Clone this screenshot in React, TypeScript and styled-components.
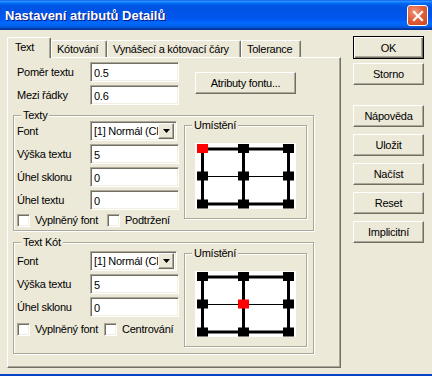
import React from "react";
import styled, { createGlobalStyle } from "styled-components";

const GlobalStyle = createGlobalStyle`
  html, body {
    margin: 0;
    padding: 0;
    background: #ece9d8;
  }
  body {
    font-family: "Liberation Sans", Arial, sans-serif;
    font-size: 11px;
    letter-spacing: -0.25px;
    color: #000;
  }
`;

function CloseIcon() {
  return (
    <svg width="12" height="12" viewBox="0 0 12 12">
      <path d="M2 2 L10 10 M10 2 L2 10" stroke="#fff" strokeWidth="2.2" strokeLinecap="square" />
    </svg>
  );
}

function DownArrow() {
  return (
    <svg width="7" height="4" viewBox="0 0 7 4">
      <path d="M0 0 H7 L3.5 4 Z" fill="#000" />
    </svg>
  );
}

// grid of anchor points, `active` is [col, row] of the red one
function PlacementGrid({ active }: { active: [number, number] }) {
  const xs = [7.5, 48.5, 93.5];
  const ys = [5.5, 33, 61];
  return (
    <svg width="101" height="66" viewBox="0 0 101 66">
      <rect x="7.5" y="6" width="86" height="55" fill="none" stroke="#000" strokeWidth="3" />
      <line x1="48.5" y1="6" x2="48.5" y2="61" stroke="#000" strokeWidth="3" />
      <line x1="7" y1="33.5" x2="94" y2="33.5" stroke="#000" strokeWidth="1" />
      {ys.map((y, r) =>
        xs.map((x, c) => (
          <rect
            key={`${r}-${c}`}
            x={x - 5.5}
            y={y - 4.5}
            width="11"
            height="9"
            fill={active[0] === c && active[1] === r ? "#ff0000" : "#000"}
          />
        ))
      )}
    </svg>
  );
}

export default function App() {
  return (
    <>
      <GlobalStyle />
      <Window>
        <TitleBar>
          <Title>Nastavení atributů Detailů</Title>
          <CloseButton>
            <CloseIcon />
          </CloseButton>
        </TitleBar>

        <Content>
          <LeftColumn>
            <TabRow>
              <Tab $active $w={44}>Text</Tab>
              <Tab $w={56}>Kótování</Tab>
              <Tab $w={134}>Vynášecí a kótovací čáry</Tab>
              <Tab $w={60}>Tolerance</Tab>
            </TabRow>

            <Panel>
              <TopSection>
                <FieldList>
                  <FieldRow>
                    <Label>Poměr textu</Label>
                    <TextInput readOnly value="0.5" />
                  </FieldRow>
                  <FieldRow>
                    <Label>Mezi řádky</Label>
                    <TextInput readOnly value="0.6" />
                  </FieldRow>
                </FieldList>
                <FontButton>Atributy fontu...</FontButton>
              </TopSection>

              <GroupBox $h={116} $top={10} $pad={5}>
                <Legend>Texty</Legend>
                <FieldList>
                  <FieldRow>
                    <Label>Font</Label>
                    <Combo>
                      <ComboText>[1] Normál (CK</ComboText>
                      <DropButton>
                        <DownArrow />
                      </DropButton>
                    </Combo>
                  </FieldRow>
                  <FieldRow>
                    <Label>Výška textu</Label>
                    <TextInput readOnly value="5" />
                  </FieldRow>
                  <FieldRow>
                    <Label>Úhel sklonu</Label>
                    <TextInput readOnly value="0" />
                  </FieldRow>
                  <FieldRow>
                    <Label>Úhel textu</Label>
                    <TextInput readOnly value="0" />
                  </FieldRow>
                  <CheckRow>
                    <CheckItem $w={90}>
                      <CheckBox />
                      Vyplněný font
                    </CheckItem>
                    <CheckItem>
                      <CheckBox />
                      Podtržení
                    </CheckItem>
                  </CheckRow>
                </FieldList>
                <PlacementBox $top={4}>
                  <Legend>Umístění</Legend>
                  <GridCanvas>
                    <PlacementGrid active={[0, 0]} />
                  </GridCanvas>
                </PlacementBox>
              </GroupBox>

              <GroupBox $h={112} $top={11} $pad={8}>
                <Legend>Text Kót</Legend>
                <FieldList>
                  <FieldRow>
                    <Label>Font</Label>
                    <Combo>
                      <ComboText>[1] Normál (CK</ComboText>
                      <DropButton>
                        <DownArrow />
                      </DropButton>
                    </Combo>
                  </FieldRow>
                  <FieldRow>
                    <Label>Výška textu</Label>
                    <TextInput readOnly value="5" />
                  </FieldRow>
                  <FieldRow>
                    <Label>Úhel sklonu</Label>
                    <TextInput readOnly value="0" />
                  </FieldRow>
                  <CheckRow $top={2}>
                    <CheckItem $w={87}>
                      <CheckBox />
                      Vyplněný font
                    </CheckItem>
                    <CheckItem>
                      <CheckBox />
                      Centrování
                    </CheckItem>
                  </CheckRow>
                </FieldList>
                <PlacementBox $top={2}>
                  <Legend>Umístění</Legend>
                  <GridCanvas>
                    <PlacementGrid active={[1, 1]} />
                  </GridCanvas>
                </PlacementBox>
              </GroupBox>
            </Panel>
          </LeftColumn>

          <ButtonColumn>
            <DefaultButton>OK</DefaultButton>
            <SideButton $top={4}>Storno</SideButton>
            <SideButton $top={20}>Nápověda</SideButton>
            <SideButton>Uložit</SideButton>
            <SideButton>Načíst</SideButton>
            <SideButton>Reset</SideButton>
            <SideButton>Implicitní</SideButton>
          </ButtonColumn>
        </Content>
        <BottomEdge />
      </Window>
    </>
  );
}

const Window = styled.div`
  width: 432px;
  height: 376px;
  overflow: hidden;
  display: flex;
  flex-direction: column;
  background: #ece9d8;
`;

const TitleBar = styled.div`
  height: 30px;
  flex: none;
  display: flex;
  align-items: center;
  justify-content: space-between;
  padding: 0 4px 0 5px;
  box-sizing: border-box;
  background: linear-gradient(
    to bottom,
    #0058ee 0%,
    #3593ff 4%,
    #288eff 6%,
    #127dff 8%,
    #036ffc 10%,
    #0262ee 14%,
    #0057e5 20%,
    #0054e3 24%,
    #0055eb 56%,
    #005bf5 66%,
    #026afe 76%,
    #0062ef 86%,
    #0052d6 92%,
    #0040ab 94%,
    #003092 100%
  );
`;

const Title = styled.span`
  color: #fff;
  font-weight: bold;
  font-size: 13px;
  letter-spacing: 0;
  text-shadow: 1px 1px 0 #0a1883;
  margin-top: 1px;
`;

const CloseButton = styled.div`
  width: 21px;
  height: 21px;
  box-sizing: border-box;
  border: 1px solid #fff;
  border-radius: 3px;
  background: radial-gradient(circle at 35% 30%, #f0957a 0%, #e2613c 45%, #c9431f 100%);
  display: flex;
  align-items: center;
  justify-content: center;
  margin-top: 1px;
`;

const Content = styled.div`
  flex: 1;
  display: flex;
  padding: 7px 0 0 7px;
`;

const LeftColumn = styled.div`
  width: 334px;
  display: flex;
  flex-direction: column;
`;

const TabRow = styled.div`
  height: 20px;
  display: flex;
  align-items: flex-end;
  position: relative;
  z-index: 1;
`;

const Tab = styled.div<{ $active?: boolean; $w: number }>`
  width: ${(p) => p.$w}px;
  height: ${(p) => (p.$active ? 21 : 17)}px;
  margin-bottom: ${(p) => (p.$active ? -1 : 0)}px;
  box-sizing: border-box;
  padding-left: ${(p) => (p.$active ? 7 : 5)}px;
  padding-bottom: ${(p) => (p.$active ? 2 : 0)}px;
  display: flex;
  align-items: center;
  white-space: nowrap;
  background: #ece9d8;
  border-top: 1px solid #fff;
  border-left: 1px solid #fff;
  border-right: 1px solid #716f64;
  box-shadow: inset -1px 0 0 #aca899;
  border-radius: 2px 2px 0 0;
`;

const Panel = styled.div`
  width: 334px;
  height: 311px;
  box-sizing: border-box;
  border: 1px solid;
  border-color: #fff #716f64 #716f64 #fff;
  box-shadow: inset -1px -1px 0 #aca899;
  display: flex;
  flex-direction: column;
  padding: 4px 0 0 5px;
`;

const TopSection = styled.div`
  display: flex;
  padding-left: 4px;
`;

const FieldList = styled.div`
  display: flex;
  flex-direction: column;
  gap: 3px;
`;

const FieldRow = styled.div`
  height: 20px;
  display: flex;
  align-items: center;
`;

const Label = styled.span`
  width: 73px;
  flex: none;
  white-space: nowrap;
`;

const sunken = `
  box-sizing: border-box;
  border: 1px solid;
  border-color: #aca899 #fff #fff #aca899;
  box-shadow: inset 1px 1px 0 #716f64, inset -1px -1px 0 #f1efe2;
  background: #fff;
`;

const TextInput = styled.input`
  ${sunken}
  width: 89px;
  height: 20px;
  margin: 0;
  padding: 1px 0 0 3px;
  font: inherit;
  letter-spacing: inherit;
  color: #000;
  outline: none;
`;

const raised = `
  box-sizing: border-box;
  border: 1px solid;
  border-color: #fff #716f64 #716f64 #fff;
  box-shadow: inset -1px -1px 0 #aca899;
  background: #ece9d8;
  display: flex;
  align-items: center;
  justify-content: center;
  white-space: nowrap;
`;

const FontButton = styled.div`
  ${raised}
  width: 101px;
  height: 22px;
  margin: 10px 0 0 16px;
`;

const GroupBox = styled.div<{ $h: number; $top: number; $pad: number }>`
  position: relative;
  width: 301px;
  height: ${(p) => p.$h}px;
  margin-top: ${(p) => p.$top}px;
  box-sizing: border-box;
  border: 1px solid #aca899;
  box-shadow: inset 1px 1px 0 #fff, 1px 1px 0 #fff;
  display: grid;
  grid-template-columns: 167px 123px;
  align-items: start;
  padding: ${(p) => p.$pad}px 6px 0 3px;
`;

const Legend = styled.span`
  position: absolute;
  top: -7px;
  left: 7px;
  padding: 0 2px;
  background: #ece9d8;
  line-height: 13px;
`;

const Combo = styled.div`
  ${sunken}
  width: 87px;
  height: 20px;
  display: flex;
  align-items: center;
  padding: 2px 2px 2px 3px;
  overflow: hidden;
`;

const ComboText = styled.span`
  flex: 1;
  overflow: hidden;
  white-space: nowrap;
  color: #000;
`;

const DropButton = styled.div`
  ${raised}
  width: 16px;
  height: 16px;
  flex: none;
`;

const CheckRow = styled.div<{ $top?: number }>`
  display: flex;
  align-items: center;
  height: 14px;
  margin-top: ${(p) => p.$top ?? 0}px;
`;

const CheckItem = styled.label<{ $w?: number }>`
  display: flex;
  align-items: center;
  gap: 5px;
  white-space: nowrap;
  width: ${(p) => (p.$w ? `${p.$w}px` : "auto")};
`;

const CheckBox = styled.span`
  ${sunken}
  width: 13px;
  height: 13px;
  flex: none;
`;

const PlacementBox = styled.div<{ $top: number }>`
  position: relative;
  width: 123px;
  height: 94px;
  margin-top: ${(p) => p.$top}px;
  box-sizing: border-box;
  border: 1px solid #aca899;
  box-shadow: inset 1px 1px 0 #fff, 1px 1px 0 #fff;
  padding: 17px 0 0 10px;
`;

const GridCanvas = styled.div`
  width: 101px;
  height: 66px;
  background: #fff;
  svg {
    display: block;
  }
`;

const ButtonColumn = styled.div`
  display: flex;
  flex-direction: column;
  gap: 7px;
  margin: -1px 0 0 12px;
`;

const SideButton = styled.div<{ $top?: number }>`
  ${raised}
  width: 71px;
  height: 22px;
  margin-top: ${(p) => (p.$top !== undefined ? p.$top - 7 : 0)}px;
`;

const DefaultButton = styled.div`
  ${raised}
  width: 71px;
  height: 23px;
  border-color: #000;
  box-shadow: inset 1px 1px 0 #fff, inset -1px -1px 0 #716f64, inset -2px -2px 0 #aca899;
`;

const BottomEdge = styled.div`
  height: 2px;
  flex: none;
  background: #0842c8;
`;
